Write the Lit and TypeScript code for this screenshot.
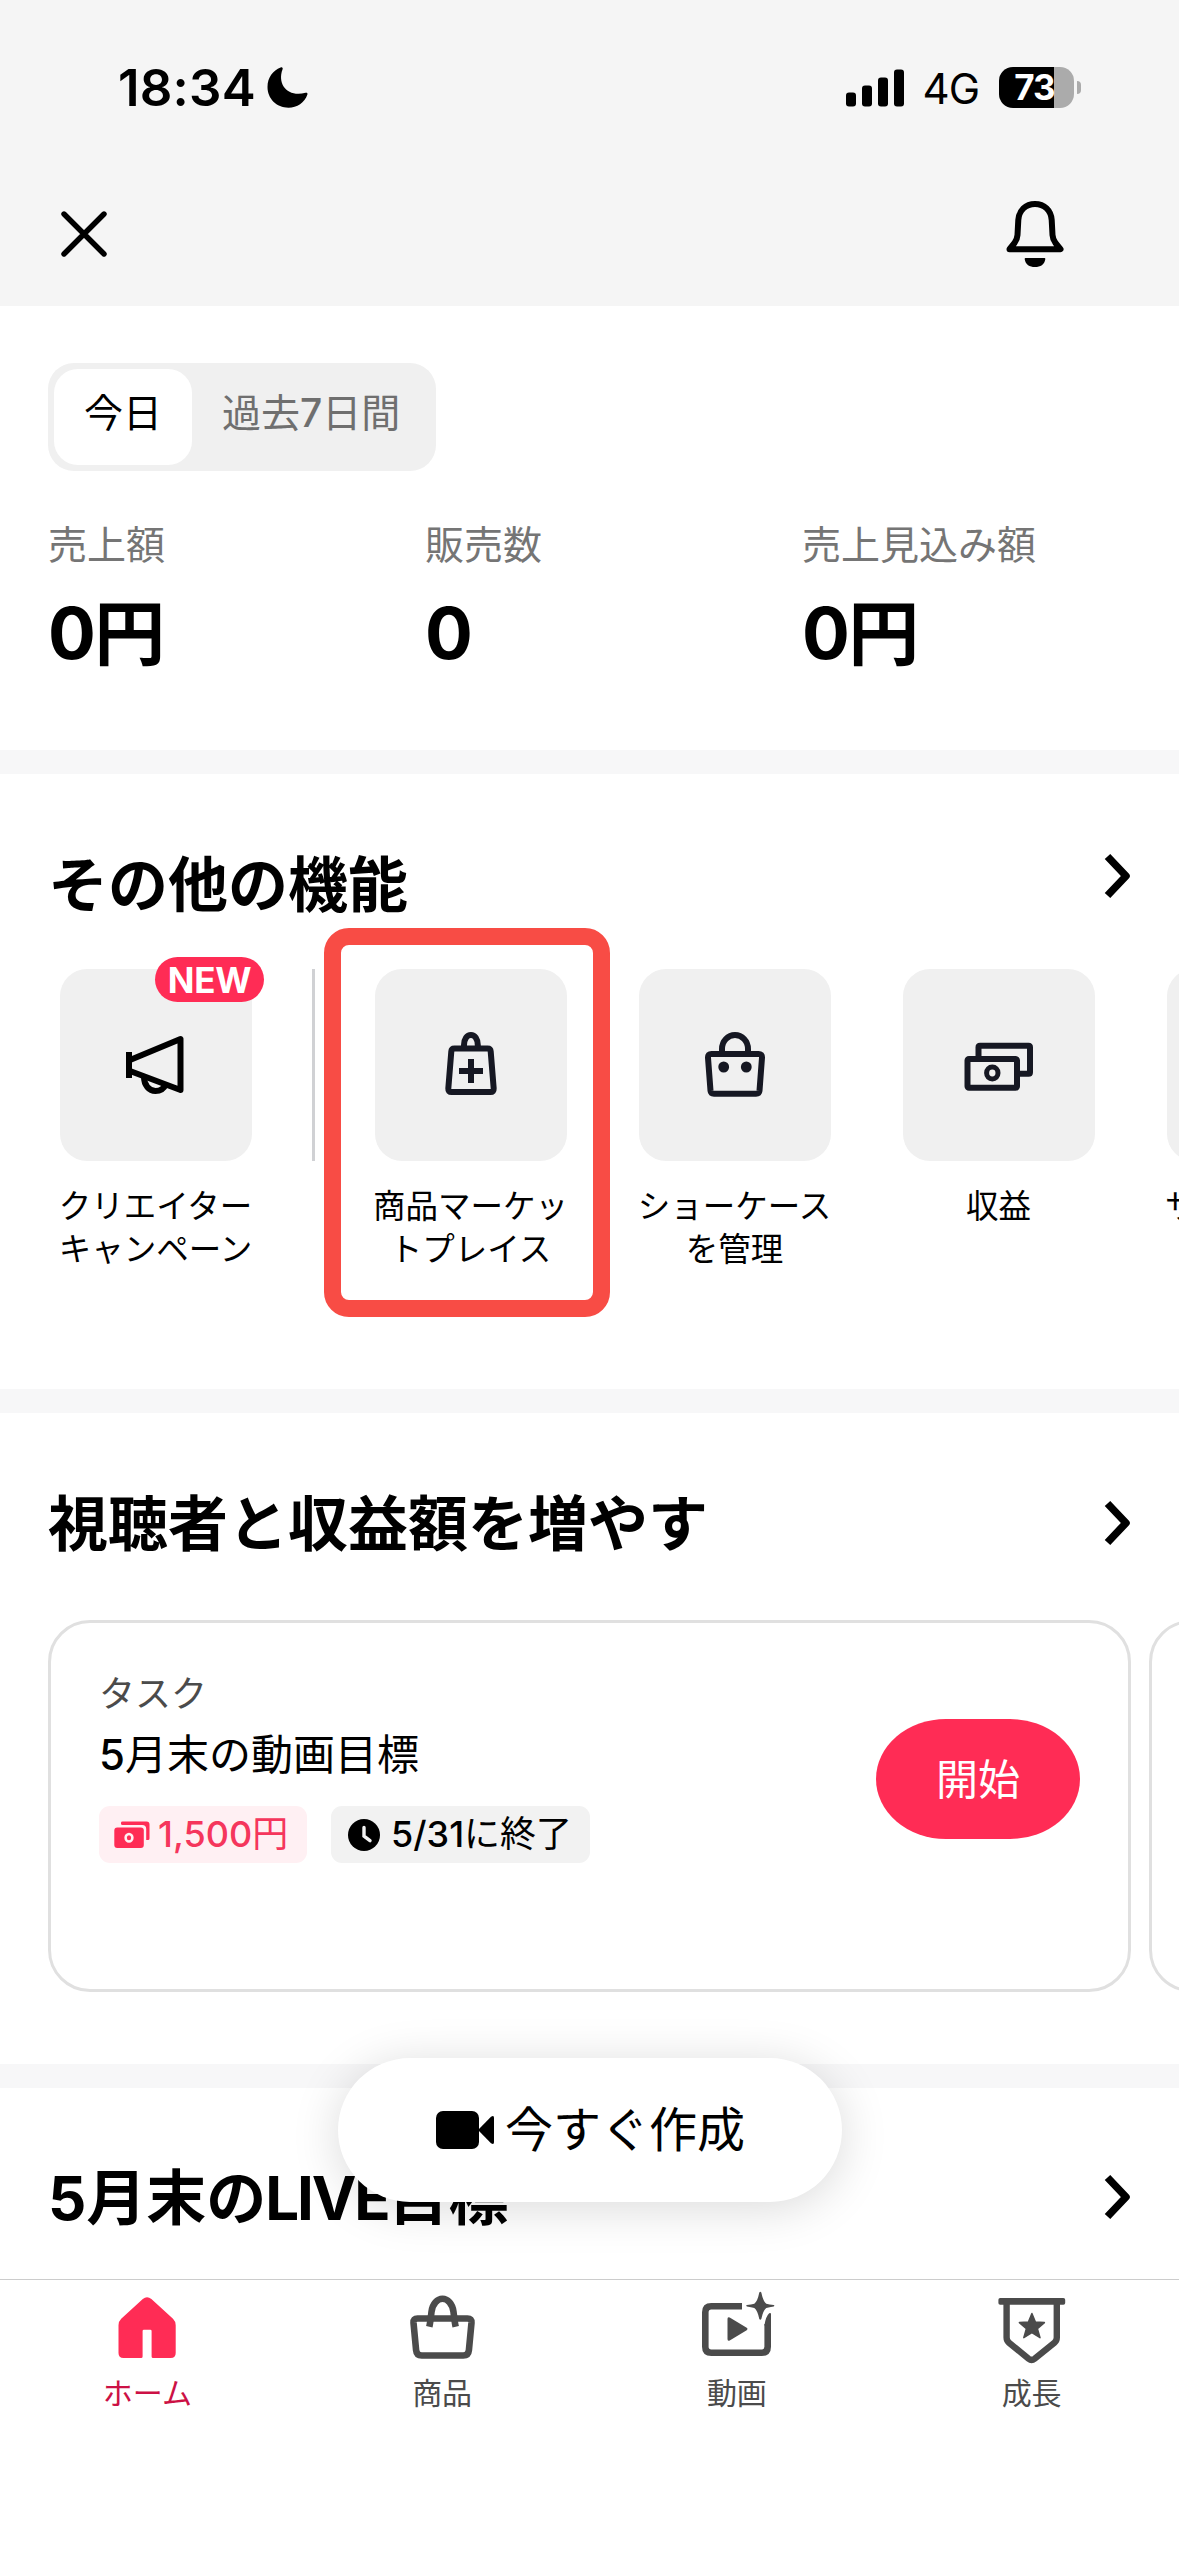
import { LitElement, html, css, svg, nothing } from "lit";
import { customElement } from "lit/decorators.js";

const ink = "#161823";

const megaphone = svg`
  <g fill="none" stroke="#000" stroke-width="6" stroke-linejoin="round">
    <path d="M69 83v26" />
    <path d="M70 91L120.500 70v51L70 102" />
    <path d="M84 108c0 8 5 14 11.500 14c5 0 8.500-2.500 10.500-7" />
  </g>`;

const bagPlus = svg`
  <g fill="none" stroke=${ink} stroke-width="6" stroke-linejoin="round">
    <path d="M79.500 79.500h33q3 0 3.200 3l3 37q.2 3.500-3.200 3.500h-39q-3.400 0-3.200-3.500l3-37q.2-3 3.200-3z" />
    <path d="M89 79v-3c0-6 3-10 6.900-10s6.900 4 6.900 10v3" />
    <path d="M84 102h24M96 90v24" />
  </g>`;

const bagFace = svg`
  <g fill="none" stroke=${ink} stroke-width="6" stroke-linejoin="round">
    <path d="M72.500 85h47q3.700 0 3.500 3.700l-2.500 33q-.3 3-3.500 3h-42q-3.200 0-3.500-3l-2.500-33q-.2-3.700 3.500-3.700z" />
    <path d="M83 84v-4c0-8 6-14 13-14s13 6 13 14v4" />
  </g>
  <ellipse cx="84.700" cy="98" rx="5.400" ry="5.600" fill=${ink} />
  <ellipse cx="107.300" cy="98" rx="5.400" ry="5.600" fill=${ink} />`;

const cash = svg`
  <g fill="none" stroke=${ink} stroke-width="6" stroke-linejoin="round">
    <rect x="64.500" y="90" width="49.500" height="28.700" rx="1.500" />
    <path d="M75.500 90V78.200q0-1.500 1.500-1.500h48.500q1.500 0 1.500 1.500v25q0 1.500-1.500 1.500H115" />
  </g>
  <ellipse cx="89.300" cy="104" rx="5.700" ry="5.900" fill="none" stroke=${ink} stroke-width="5" />`;

const homeIcon = svg`
  <path fill="#ff2c55" d="M35.800 11q4.200-3.500 8.600 0L66 30.800q2.700 2.600 2.700 6.500V65q0 5-5 5H46.100q-1.500 0-1.500-1.500V43q0-1.300-1.300-1.300h-6.400q-1.300 0-1.300 1.300v25.500q0 1.500-1.500 1.500H16.500q-5 0-5-5V37.300q0-3.900 2.700-6.500z" />`;

const goodsIcon = svg`
  <g fill="none" stroke="#4b4b4b" stroke-width="6.600" stroke-linejoin="round">
    <path d="M15.500 30.500h50q4.300 0 4 4.200l-2.600 27.500q-.5 5.300-5.600 5.300H19.700q-5.100 0-5.600-5.300L11.500 34.700q-.3-4.200 4-4.200z" />
    <path d="M27.300 38.800c1-4 1.700-11 2.200-15c1-8 6-13 11-13s10 5 11 13c.5 4 1.200 11 2.200 15" />
  </g>`;

const videoIcon = svg`
  <path fill="none" stroke="#4b4b4b" stroke-width="6.600" d="M45 18.300H14.300q-6 0-6 6v34.400q0 6 6 6h50.400q6 0 6-6V36" />
  <path fill="#4b4b4b" d="M67.400 37.500q1.200-9 4.800-12.300q1.800-.6 1.800.8v11.500zM30.500 31q0-2.600 2.200-1.400l17 10.200q1.500 1.200 0 2.400l-17 10.200q-2.200 1.200-2.200-1.400z" />
  <path fill="#4b4b4b" d="M62.300 4.500q1-1.600 2 0q1.800 9 5 11.200q3 1 7.400 1.400q1.300.6 0 1.300q-4.400.5-7.400 1.500q-3.200 2.200-5 11.100q-1 1.600-2 0q-1.800-8.900-5-11.100q-3-1-7.400-1.500q-1.300-.7 0-1.300q4.400-.4 7.400-1.400q3.200-2.200 5-11.200z" />`;

const growthIcon = svg`
  <rect x="6.400" y="10" width="66.800" height="6.800" rx="1.800" fill="#4b4b4b" />
  <path fill="none" stroke="#4b4b4b" stroke-width="6.400" d="M14.600 14v38.500q0 3.200 2.400 5.200l19.600 16q3 2.300 6 0l19.800-16q2.400-2 2.400-5.200V14" transform="translate(0 -3)" />
  <path fill="#4b4b4b" stroke="#4b4b4b" stroke-width="1.500" stroke-linejoin="round" d="M39.900 25.500l3.500 8.600 9 .5-7 6 2.600 9.100-8.100-5-8.100 5 2.600-9.100-7-6 9-.5z" />`;

const features = [
  { icon: megaphone, lines: ["クリエイター", "キャンペーン"], badge: "NEW", marked: false },
  { icon: bagPlus, lines: ["商品マーケッ", "トプレイス"], badge: "", marked: true },
  { icon: bagFace, lines: ["ショーケース", "を管理"], badge: "", marked: false },
  { icon: cash, lines: ["収益"], badge: "", marked: false },
];

const stats = [
  { label: "売上額", value: "0円" },
  { label: "販売数", value: "0" },
  { label: "売上見込み額", value: "0円" },
];

const tabs = [
  { icon: homeIcon, label: "ホーム", active: true },
  { icon: goodsIcon, label: "商品", active: false },
  { icon: videoIcon, label: "動画", active: false },
  { icon: growthIcon, label: "成長", active: false },
];

@customElement("section-heading")
export class SectionHeading extends LitElement {
  static styles = css`
    :host {
      display: flex;
      align-items: center;
      justify-content: space-between;
      height: 80px;
      padding: 0 48px;
    }
    .title {
      margin: 2px 0 0;
      font-size: 60px;
      line-height: 80px;
      font-weight: 700;
      white-space: nowrap;
    }
    .chevron {
      display: block;
      width: 27px;
      height: 46px;
      margin-bottom: var(--chevron-lift, 0);
    }
  `;

  render() {
    return html`
      <h2 class="title"><slot></slot></h2>
      <svg class="chevron" viewBox="0 0 27 46">
        <path d="M3.500 3.500L22 23 3.500 42.500" fill="none" stroke="#000" stroke-width="7.600" stroke-linejoin="round" />
      </svg>
    `;
  }
}

@customElement("app-root")
export class AppRoot extends LitElement {
  static styles = css`
    :host {
      display: block;
      width: 1179px;
      height: 2556px;
      overflow: hidden;
      position: relative;
      background: #fff;
      color: #000;
      font-family: Inter, "Noto Sans CJK JP", sans-serif;
    }
    svg {
      display: block;
      flex: none;
    }
    .top {
      height: 306px;
      background: #f5f5f5;
    }
    .status {
      display: flex;
      align-items: center;
      height: 175px;
      padding: 0 98px 0 118px;
    }
    .time {
      font-size: 51px;
      line-height: 60px;
      font-weight: 600;
      letter-spacing: 0.2px;
    }
    .moon {
      margin-left: 11px;
    }
    .signal {
      margin-left: auto;
    }
    .network {
      margin-left: 19px;
      font-size: 42px;
      line-height: 50px;
      letter-spacing: -1px;
      margin-top: 3px;
    }
    .battery {
      display: flex;
      align-items: center;
      gap: 3px;
      margin-left: 20px;
    }
    .cell {
      box-sizing: border-box;
      display: flex;
      align-items: center;
      justify-content: center;
      width: 75px;
      height: 41px;
      padding-right: 4px;
      border-radius: 14px;
      background: linear-gradient(90deg, #000 73%, #ababab 73%);
      color: #fff;
      font-size: 35px;
      line-height: 41px;
      font-weight: 700;
      letter-spacing: -1px;
    }
    .nub {
      width: 4px;
      height: 13px;
      border-radius: 0 4px 4px 0;
      background: #ababab;
    }
    .actions {
      display: flex;
      align-items: center;
      justify-content: space-between;
      height: 118px;
      padding: 0 114px 0 61px;
    }
    .overview {
      box-sizing: border-box;
      height: 444px;
      padding: 57px 48px 0;
    }
    .segment {
      box-sizing: border-box;
      display: flex;
      width: 388px;
      height: 108px;
      padding: 6px;
      border-radius: 26px;
      background: #f0f0f0;
      font-size: 39px;
      line-height: 88px;
      color: #6f6f6f;
    }
    .choice {
      padding-left: 30px;
      white-space: nowrap;
    }
    .choice.on {
      width: 138px;
      padding: 0;
      text-align: center;
      border-radius: 24px;
      background: #fff;
      color: #000;
    }
    .num {
      font-weight: 500;
    }
    .stats {
      display: grid;
      grid-template-columns: 377px 377px 1fr;
      margin-top: 47px;
    }
    .stat-label {
      font-size: 39px;
      line-height: 54px;
      color: #757575;
    }
    .stat-value {
      margin-top: 19px;
      font-size: 71px;
      line-height: 84px;
      font-weight: 700;
      letter-spacing: -1.600px;
    }
    .band {
      height: 24px;
      background: #f7f7f8;
    }
    .features {
      box-sizing: border-box;
      height: 615px;
      padding-top: 70px;
      --chevron-lift: 16px;
    }
    .tiles {
      display: flex;
      gap: 72px;
      margin-top: 45px;
      padding-left: 375px;
    }
    .tiles .feature:first-child {
      margin-left: -315px;
      margin-right: -12px;
    }
    .rule {
      flex: none;
      width: 3px;
      height: 192px;
      margin-right: -12px;
      background: #d0d1d4;
    }
    .feature {
      position: relative;
      flex: none;
      width: 192px;
    }
    .tile {
      height: 192px;
      border-radius: 27px;
      background: #f0f0f0;
    }
    .caption {
      margin-top: 25px;
      font-size: 32.500px;
      line-height: 42.500px;
      text-align: center;
      white-space: nowrap;
      margin-left: -5px;
      margin-right: -4px;
    }
    .caption.cut {
      text-align: left;
      margin-left: -2px;
    }
    .badge {
      position: absolute;
      left: 95px;
      top: -12px;
      width: 109px;
      height: 45px;
      border-radius: 23px;
      background: #ff2c55;
      color: #fff;
      font-size: 35px;
      line-height: 46px;
      font-weight: 700;
      text-align: center;
      letter-spacing: -0.300px;
    }
    .marker {
      position: absolute;
      box-sizing: border-box;
      left: -51px;
      top: -41px;
      width: 286px;
      height: 389px;
      border: 17px solid #f84c45;
      border-radius: 25px;
    }
    .tasks {
      box-sizing: border-box;
      height: 651px;
      padding-top: 70px;
    }
    .cards {
      display: flex;
      gap: 18px;
      margin-top: 57px;
      padding-left: 48px;
    }
    .card {
      box-sizing: border-box;
      flex: none;
      display: flex;
      justify-content: space-between;
      width: 1083px;
      height: 372px;
      padding: 46px 48px 0;
      border: 3px solid #e0e0e0;
      border-radius: 42px;
    }
    .kind {
      font-size: 36px;
      line-height: 50px;
      color: #4b4b4b;
    }
    .goal {
      margin-top: 6px;
      font-size: 42px;
      line-height: 60px;
    }
    .chips {
      display: flex;
      gap: 24px;
      margin-top: 21px;
    }
    .chip {
      box-sizing: border-box;
      display: flex;
      align-items: center;
      height: 57px;
      border-radius: 11px;
      background: #f2f2f2;
      font-size: 36px;
      line-height: 57px;
      white-space: nowrap;
    }
    .chip.reward {
      width: 208px;
      padding-left: 15px;
      gap: 8px;
      background: #fff0f3;
      color: #f5365c;
    }
    .chip.due {
      width: 259px;
      padding-left: 17px;
      gap: 11px;
    }
    .start {
      width: 204px;
      height: 120px;
      margin-top: 50px;
      border-radius: 70px / 60px;
      background: #ff2c55;
      color: #fff;
      font-size: 42px;
      line-height: 121px;
      text-align: center;
    }
    .live {
      box-sizing: border-box;
      height: 191px;
      padding-top: 69px;
    }
    .latin {
      letter-spacing: -2.200px;
      margin-left: -1px;
    }
    .create {
      position: absolute;
      left: 338px;
      top: 2058px;
      display: flex;
      align-items: center;
      box-sizing: border-box;
      width: 504px;
      height: 144px;
      padding-left: 98px;
      gap: 11px;
      border-radius: 72px;
      background: #fff;
      box-shadow: 0 6px 48px rgba(0, 0, 0, 0.15);
      font-size: 48px;
      line-height: 146px;
      white-space: nowrap;
    }
    .tabbar {
      position: relative;
      display: grid;
      grid-template-columns: repeat(4, 1fr);
      border-top: 1px solid #ccc;
      height: 276px;
      background: #fff;
    }
    .tab {
      display: flex;
      flex-direction: column;
      align-items: center;
      gap: 7px;
      padding-top: 8px;
      font-size: 30px;
      line-height: 36px;
      color: #4b4b4b;
    }
    .tab.active {
      color: #cc1145;
    }
  `;

  private renderTop() {
    return html`
      <header class="top">
        <div class="status">
          <span class="time">18:34</span>
          <svg class="moon" width="41" height="41" viewBox="0 0 41 41">
            <path d="M15 .4c.8.300.9 1 .500 2C10 17 20.500 30.500 38.500 25.800c1.500-.4 2.300.3 1.900 1.600C37.600 35.500 30 40.700 21.500 40.700C9.500 40.700.5 31.500.5 20C.5 10.500 6 3.500 13.600.5c.6-.2 1-.3 1.400-.1z" />
          </svg>
          <svg class="signal" width="58" height="38" viewBox="0 0 58 38">
            <rect x="0" y="23.500" width="10" height="14" rx="3" />
            <rect x="16" y="16.500" width="10" height="21" rx="3" />
            <rect x="32" y="8.500" width="10" height="29" rx="3" />
            <rect x="48" y=".5" width="10" height="37" rx="3" />
          </svg>
          <span class="network">4G</span>
          <div class="battery">
            <span class="cell">73</span>
            <span class="nub"></span>
          </div>
        </div>
        <div class="actions">
          <svg width="46" height="46" viewBox="0 0 46 46">
            <path d="M3 3l40 40M43 3L3 43" stroke="#000" stroke-width="5.400" stroke-linecap="round" />
          </svg>
          <svg width="60" height="66" viewBox="0 0 60 66">
            <path d="M30 3c9.500 0 16 6.500 16.700 16l.8 15c.2 3.500 1.300 5.600 3 8l5 6.200H4.500l5-6.200c1.700-2.400 2.800-4.500 3-8l.8-15C14 9.500 20.500 3 30 3z" fill="none" stroke="#000" stroke-width="6" stroke-linejoin="round" />
            <path d="M20.500 57h19q1 0 .8 1.200C39.500 63.500 35.500 66 30 66s-9.500-2.500-10.300-7.800q-.2-1.200.8-1.200z" />
          </svg>
        </div>
      </header>
    `;
  }

  private renderOverview() {
    return html`
      <section class="overview">
        <div class="segment">
          <span class="choice on">今日</span>
          <span class="choice">過去<span class="num">7</span>日間</span>
        </div>
        <div class="stats">
          ${stats.map(
            (s) => html`
              <div>
                <div class="stat-label">${s.label}</div>
                <div class="stat-value">${s.value}</div>
              </div>
            `
          )}
        </div>
      </section>
    `;
  }

  private renderFeatures() {
    return html`
      <section class="features">
        <section-heading>その他の機能</section-heading>
        <div class="tiles">
          ${features.map(
            (f, i) => html`
              <div class="feature">
                <div class="tile"><svg width="192" height="192" viewBox="0 0 192 192">${f.icon}</svg></div>
                <div class="caption">${f.lines.map((l) => html`<div>${l}</div>`)}</div>
                ${f.badge ? html`<span class="badge">${f.badge}</span>` : nothing}
                ${f.marked ? html`<span class="marker"></span>` : nothing}
              </div>
              ${i === 0 ? html`<span class="rule"></span>` : nothing}
            `
          )}
          <div class="feature">
            <div class="tile"></div>
            <div class="caption cut">サ</div>
          </div>
        </div>
      </section>
    `;
  }

  private renderTasks() {
    return html`
      <section class="tasks">
        <section-heading>視聴者と収益額を増やす</section-heading>
        <div class="cards">
          <article class="card">
            <div>
              <div class="kind">タスク</div>
              <div class="goal"><span class="num">5</span>月末の動画目標</div>
              <div class="chips">
                <span class="chip reward">
                  <svg width="36" height="28" viewBox="0 0 36 28">
                    <path fill="#ff2c55" d="M7 1.800Q7 .5 8.500.5h24Q35.500.5 35.500 3.500v14q0 1.500-1.500 1.500h-1.800V8q0-4-4-4H8.500Q7 4 7 2.800z" />
                    <rect x=".3" y="6.500" width="29.500" height="20.500" rx="3" fill="#ff2c55" />
                    <ellipse cx="15" cy="16.800" rx="3.400" ry="3.800" fill="none" stroke="#fff0f3" stroke-width="2.500" />
                  </svg>
                  <span><span class="num">1,500</span>円</span>
                </span>
                <span class="chip due">
                  <svg width="32" height="32" viewBox="0 0 32 32">
                    <circle cx="16" cy="16" r="16" />
                    <path d="M16 8.500v8.700l6 4.500" fill="none" stroke="#f2f2f2" stroke-width="3.400" stroke-linecap="round" />
                  </svg>
                  <span><span class="num">5/31</span>に終了</span>
                </span>
              </div>
            </div>
            <div class="start">開始</div>
          </article>
          <article class="card"></article>
        </div>
      </section>
    `;
  }

  render() {
    return html`
      ${this.renderTop()} ${this.renderOverview()}
      <div class="band"></div>
      ${this.renderFeatures()}
      <div class="band"></div>
      ${this.renderTasks()}
      <div class="band"></div>
      <section class="live">
        <section-heading>5月末の<span class="latin">LIVE</span>目標</section-heading>
      </section>
      <div class="create">
        <svg width="58" height="38" viewBox="0 0 58 38">
          <rect x="0" y="0" width="43" height="38" rx="7" />
          <path d="M42 19L55 5.800q3-2 3 1v24.400q0 3-3 1z" />
        </svg>
        <span>今すぐ作成</span>
      </div>
      <nav class="tabbar">
        ${tabs.map(
          (t) => html`
            <div class="tab ${t.active ? "active" : ""}">
              <svg width="80" height="80" viewBox="0 0 80 80">${t.icon}</svg>
              <span>${t.label}</span>
            </div>
          `
        )}
      </nav>
    `;
  }
}
